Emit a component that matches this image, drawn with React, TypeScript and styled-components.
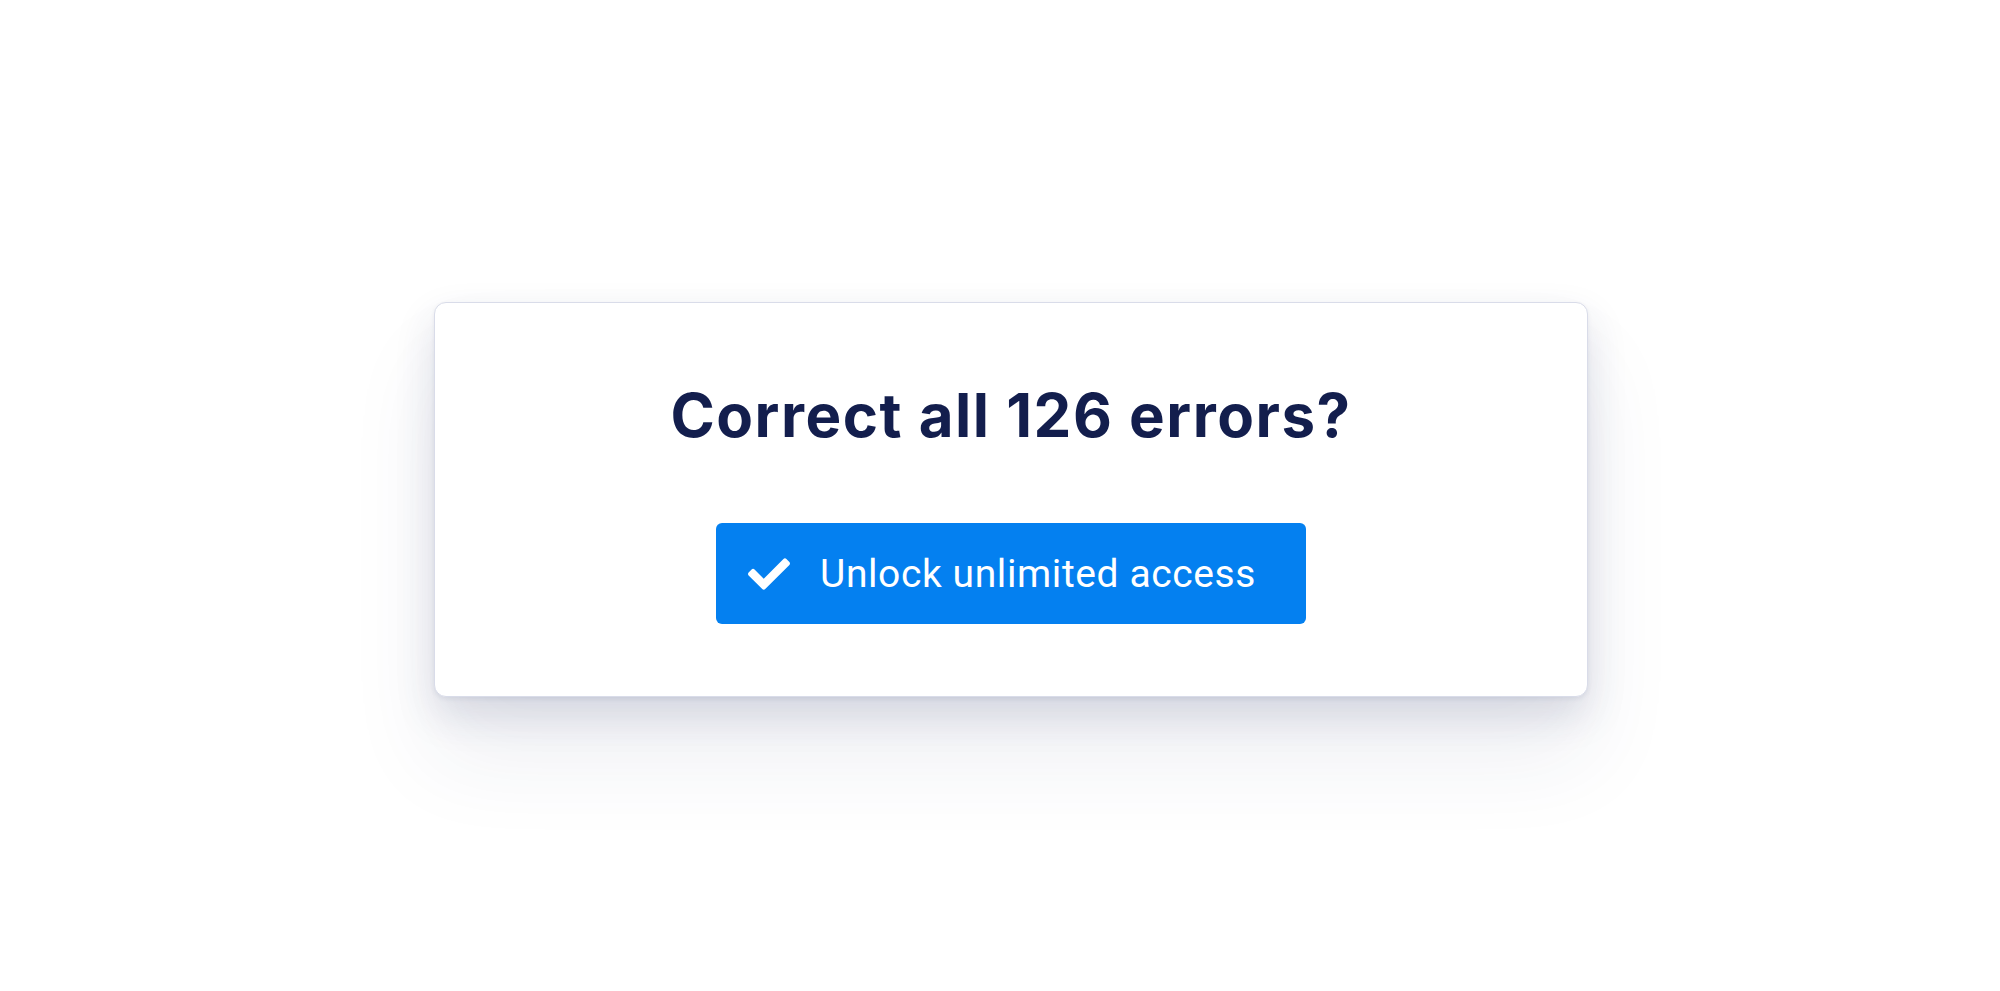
import React from "react";
import styled, { createGlobalStyle } from "styled-components";
import { FaCheck } from "react-icons/fa";

const GlobalStyle = createGlobalStyle`
  html, body {
    margin: 0;
    padding: 0;
    background: #ffffff;
  }
  * {
    box-sizing: border-box;
  }
`;

const Page = styled.main`
  min-height: 100vh;
  display: flex;
  align-items: center;
  justify-content: center;
  padding: 8px 0 0 22px;
`;

const Card = styled.section`
  width: 1154px;
  height: 395px;
  display: flex;
  flex-direction: column;
  align-items: center;
  padding-top: 76px;
  background: #ffffff;
  border: 1px solid #d9dce9;
  border-radius: 12px;
  box-shadow:
    0 2px 4px rgba(40, 48, 100, 0.08),
    0 18px 40px rgba(40, 48, 100, 0.14),
    0 60px 90px rgba(40, 48, 100, 0.08);
`;

const Title = styled.h1`
  margin: 0;
  font-family: Inter, "Noto Sans", sans-serif;
  font-weight: 700;
  font-size: 60px;
  line-height: 72px;
  letter-spacing: 1.5px;
  color: #131e4d;
`;

const Button = styled.button`
  margin-top: 72px;
  width: 590px;
  height: 101px;
  display: flex;
  align-items: center;
  gap: 30px;
  padding: 0 0 0 32px;
  border: none;
  border-radius: 6px;
  background: #0480f0;
  color: #ffffff;
  font-family: Roboto, "Liberation Sans", sans-serif;
  font-weight: 400;
  font-size: 39px;
  letter-spacing: 0.6px;
  cursor: pointer;

  & svg {
    flex: none;
    width: 42px;
    height: 42px;
  }
`;

export default function App() {
  return (
    <>
      <GlobalStyle />
      <Page>
        <Card>
          <Title>Correct all 126 errors?</Title>
          <Button>
            <FaCheck />
            Unlock unlimited access
          </Button>
        </Card>
      </Page>
    </>
  );
}
